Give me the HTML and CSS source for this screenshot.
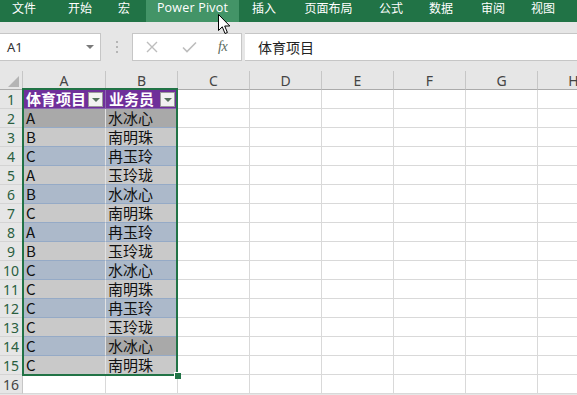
FILE: index.html
```html
<!DOCTYPE html>
<html lang="zh">
<head>
<meta charset="utf-8">
<title>Excel</title>
<link rel="stylesheet" href="styles.css">
</head>
<body>
<div class="app">
  <div class="tabs">
    <div class="tab t1">文件</div>
    <div class="tab t2">开始</div>
    <div class="tab t3">宏</div>
    <div class="tab t4 active">Power Pivot</div>
    <div class="tab t5">插入</div>
    <div class="tab t6">页面布局</div>
    <div class="tab t7">公式</div>
    <div class="tab t8">数据</div>
    <div class="tab t9">审阅</div>
    <div class="tab t10">视图</div>
  </div>
  <div class="toolbar">
    <div class="namebox"><span class="nb-text">A1</span><span class="caret"></span></div>
    <div class="dots"><i></i><i></i><i></i></div>
    <div class="fbtns">
      <svg class="ico-x" width="12" height="12" viewBox="0 0 12 12"><path d="M1 1L11 11M11 1L1 11" stroke="#bdbdbd" stroke-width="1.4" fill="none"/></svg>
      <svg class="ico-check" width="15" height="12" viewBox="0 0 15 12"><path d="M1 6.5L5 10.5L14 1.5" stroke="#bdbdbd" stroke-width="1.6" fill="none"/></svg>
      <span class="fx">fx</span>
    </div>
    <div class="finput">体育项目</div>
  </div>
  <div class="sheet">
    <div class="grid">
      <div class="corner"><span class="tri"></span></div>
      <div class="ch">A</div><div class="ch">B</div><div class="ch">C</div><div class="ch">D</div><div class="ch">E</div><div class="ch">F</div><div class="ch">G</div><div class="ch">H</div>

      <div class="rh sel-rh">1</div>
      <div class="c hd ca"><span class="hd-t">体育项目</span><span class="fbtn"></span></div>
      <div class="c hd"><span class="hd-t">业务员</span><span class="fbtn"></span></div>
      <div class="c"></div><div class="c"></div><div class="c"></div><div class="c"></div><div class="c"></div><div class="c"></div>

      <div class="rh sel-rh">2</div>
      <div class="c dk ca">A</div><div class="c dk cb">水冰心</div>
      <div class="c"></div><div class="c"></div><div class="c"></div><div class="c"></div><div class="c"></div><div class="c"></div>

      <div class="rh sel-rh">3</div>
      <div class="c lt ca">B</div><div class="c lt cb">南明珠</div>
      <div class="c"></div><div class="c"></div><div class="c"></div><div class="c"></div><div class="c"></div><div class="c"></div>

      <div class="rh sel-rh">4</div>
      <div class="c bl ca">C</div><div class="c bl cb">冉玉玲</div>
      <div class="c"></div><div class="c"></div><div class="c"></div><div class="c"></div><div class="c"></div><div class="c"></div>

      <div class="rh sel-rh">5</div>
      <div class="c lt ca">A</div><div class="c lt cb">玉玲珑</div>
      <div class="c"></div><div class="c"></div><div class="c"></div><div class="c"></div><div class="c"></div><div class="c"></div>

      <div class="rh sel-rh">6</div>
      <div class="c bl ca">B</div><div class="c bl cb">水冰心</div>
      <div class="c"></div><div class="c"></div><div class="c"></div><div class="c"></div><div class="c"></div><div class="c"></div>

      <div class="rh sel-rh">7</div>
      <div class="c lt ca">C</div><div class="c lt cb">南明珠</div>
      <div class="c"></div><div class="c"></div><div class="c"></div><div class="c"></div><div class="c"></div><div class="c"></div>

      <div class="rh sel-rh">8</div>
      <div class="c bl ca">A</div><div class="c bl cb">冉玉玲</div>
      <div class="c"></div><div class="c"></div><div class="c"></div><div class="c"></div><div class="c"></div><div class="c"></div>

      <div class="rh sel-rh">9</div>
      <div class="c lt ca">B</div><div class="c lt cb">玉玲珑</div>
      <div class="c"></div><div class="c"></div><div class="c"></div><div class="c"></div><div class="c"></div><div class="c"></div>

      <div class="rh sel-rh">10</div>
      <div class="c bl ca">C</div><div class="c bl cb">水冰心</div>
      <div class="c"></div><div class="c"></div><div class="c"></div><div class="c"></div><div class="c"></div><div class="c"></div>

      <div class="rh sel-rh">11</div>
      <div class="c lt ca">C</div><div class="c lt cb">南明珠</div>
      <div class="c"></div><div class="c"></div><div class="c"></div><div class="c"></div><div class="c"></div><div class="c"></div>

      <div class="rh sel-rh">12</div>
      <div class="c bl ca">C</div><div class="c bl cb">冉玉玲</div>
      <div class="c"></div><div class="c"></div><div class="c"></div><div class="c"></div><div class="c"></div><div class="c"></div>

      <div class="rh sel-rh">13</div>
      <div class="c lt ca">C</div><div class="c lt cb">玉玲珑</div>
      <div class="c"></div><div class="c"></div><div class="c"></div><div class="c"></div><div class="c"></div><div class="c"></div>

      <div class="rh sel-rh">14</div>
      <div class="c bl ca">C</div><div class="c dk cb">水冰心</div>
      <div class="c"></div><div class="c"></div><div class="c"></div><div class="c"></div><div class="c"></div><div class="c"></div>

      <div class="rh sel-rh">15</div>
      <div class="c lt ca last">C</div><div class="c lt cb last">南明珠</div>
      <div class="c"></div><div class="c"></div><div class="c"></div><div class="c"></div><div class="c"></div><div class="c"></div>

      <div class="rh">16</div>
      <div class="c"></div><div class="c"></div>
      <div class="c"></div><div class="c"></div><div class="c"></div><div class="c"></div><div class="c"></div><div class="c"></div>
    </div>
    <div class="selection"><span class="handle"></span></div>
  </div>
  <svg class="cursor" width="13" height="21" viewBox="0 0 13 21"><path d="M0.5 0.5L0.5 16.5L4.3 12.8L7 19.5L9.4 18.5L6.7 12L11.8 12Z" fill="#fff" stroke="#000" stroke-width="1"/></svg>
</div>
</body>
</html>
```

FILE: styles.css
```css
html, body {
  margin: 0;
  padding: 0;
}
body {
  width: 577px;
  height: 395px;
  overflow: hidden;
  background: #fff;
  font-family: "Noto Sans CJK SC", "Noto Sans", sans-serif;
}
.app {
  position: relative;
  width: 577px;
  height: 395px;
  overflow: hidden;
  background: #e6e6e6;
}

/* ribbon tabs */
.tabs {
  display: flex;
  height: 22px;
  background: #217346;
  color: #fff;
  font-size: 12px;
  line-height: 15px;
}
.tab {
  text-align: center;
  white-space: nowrap;
  height: 22px;
}
.t1 { width: 48px; }
.t2 { width: 64px; }
.t3 { width: 24px; }
.t4 { width: 93px; margin-left: 10px; font-family: "Open Sans", "Noto Sans", sans-serif; font-size: 12.5px; letter-spacing: 0.2px; }
.t5 { width: 50px; }
.t6 { width: 79px; }
.t7 { width: 46px; }
.t8 { width: 54px; }
.t9 { width: 50px; }
.t10 { width: 50px; }
.tab.active {
  background: #439467;
}

/* formula bar */
.toolbar {
  display: flex;
  align-items: stretch;
  height: 28px;
  margin-top: 11px;
}
.namebox {
  box-sizing: border-box;
  width: 101px;
  background: #fff;
  border: 1px solid #c6c6c6;
  border-left: none;
  display: flex;
  align-items: center;
  padding-left: 7px;
  font-family: "Noto Sans", sans-serif;
  font-size: 13px;
  color: #333;
}
.nb-text {
  flex: 1;
}
.caret {
  width: 0;
  height: 0;
  border-left: 4px solid transparent;
  border-right: 4px solid transparent;
  border-top: 4px solid #7a7a7a;
  margin-right: 6px;
}
.dots {
  width: 31px;
  display: flex;
  flex-direction: column;
  align-items: center;
  justify-content: center;
  gap: 3px;
}
.dots i {
  display: block;
  width: 2px;
  height: 2px;
  background: #b5b5b5;
}
.fbtns {
  box-sizing: border-box;
  width: 110px;
  background: #fff;
  border: 1px solid #c6c6c6;
  display: flex;
  align-items: center;
  padding-left: 13px;
}
.ico-x { margin-right: 24px; }
.ico-check { margin-right: 21px; }
.fx {
  font-family: "Liberation Serif", serif;
  font-style: italic;
  font-size: 14px;
  color: #5a6b5e;
  letter-spacing: -0.5px;
}
.finput {
  flex: 1;
  margin-left: 3px;
  background: #fff;
  border-top: 1px solid #c6c6c6;
  border-bottom: 1px solid #c6c6c6;
  padding-left: 13px;
  font-size: 14px;
  line-height: 26px;
  color: #222;
}

/* sheet */
.sheet {
  position: relative;
  margin-top: 10px;
  background: #fff;
}
.grid {
  display: grid;
  grid-template-columns: 23px 83px 72px 72px 72px 72px 72px 72px 72px;
  grid-auto-rows: 19px;
  width: 610px;
}
.corner {
  box-sizing: border-box;
  background: #e6e6e6;
  border-right: 1px solid #c6c6c6;
  border-bottom: 1px solid #ababab;
  position: relative;
}
.tri {
  position: absolute;
  right: 3px;
  bottom: 2px;
  width: 0;
  height: 0;
  border-left: 11px solid transparent;
  border-bottom: 11px solid #b4b4b4;
}
.ch {
  box-sizing: border-box;
  background: #e6e6e6;
  border-right: 1px solid #c6c6c6;
  border-bottom: 1px solid #ababab;
  text-align: center;
  font-family: "Noto Sans", sans-serif;
  font-size: 14px;
  line-height: 19px;
  color: #444;
}
.rh {
  box-sizing: border-box;
  background: #e6e6e6;
  border-right: 1px solid #c6c6c6;
  border-bottom: 1px solid #d4d4d4;
  text-align: center;
  font-family: "Noto Sans", sans-serif;
  font-size: 14px;
  line-height: 19px;
  color: #444;
}
.rh.sel-rh {
  color: #2a5e40;
}
.c {
  box-sizing: border-box;
  border-right: 1px solid #d9d9d9;
  border-bottom: 1px solid #d9d9d9;
  font-size: 15px;
  line-height: 18px;
  color: #111;
  white-space: nowrap;
}
.ca { padding-left: 3px; }
.cb { padding-left: 2px; }
.lt { background: #c9c9c9; border-bottom-color: #95aac6; border-right-color: #e2e2e2; }
.bl { background: #acb9ca; border-bottom-color: #95aac6; border-right-color: #e2e2e2; }
.dk { background: #a9a9a9; border-bottom-color: #95aac6; border-right-color: #e2e2e2; }
.c.last { border-bottom-color: #d9d9d9; }
.hd {
  background: #6f2f9a;
  border-bottom-color: #8a66b0;
  border-right-color: #8a66b0;
  color: #fff;
  font-weight: bold;
  display: flex;
  align-items: center;
  padding-left: 3px;
  padding-right: 2px;
}
.hd-t { flex: 1; }
.fbtn {
  box-sizing: border-box;
  width: 15px;
  height: 15px;
  background: #f2f2f2;
  border: 1px solid #9a9a9a;
  position: relative;
}
.fbtn::after {
  content: "";
  position: absolute;
  left: 3px;
  top: 5px;
  width: 0;
  height: 0;
  border-left: 4px solid transparent;
  border-right: 4px solid transparent;
  border-top: 4px solid #55705c;
}

.selection {
  position: absolute;
  left: 22px;
  top: 17px;
  width: 156px;
  height: 288px;
  box-sizing: border-box;
  border: 2px solid #217346;
  pointer-events: none;
}
.handle {
  position: absolute;
  right: -5px;
  bottom: -5px;
  width: 6px;
  height: 6px;
  background: #217346;
  border: 1px solid #fff;
  border-right: none;
  border-bottom: none;
}
.cursor {
  position: absolute;
  left: 218px;
  top: 14px;
}
```
